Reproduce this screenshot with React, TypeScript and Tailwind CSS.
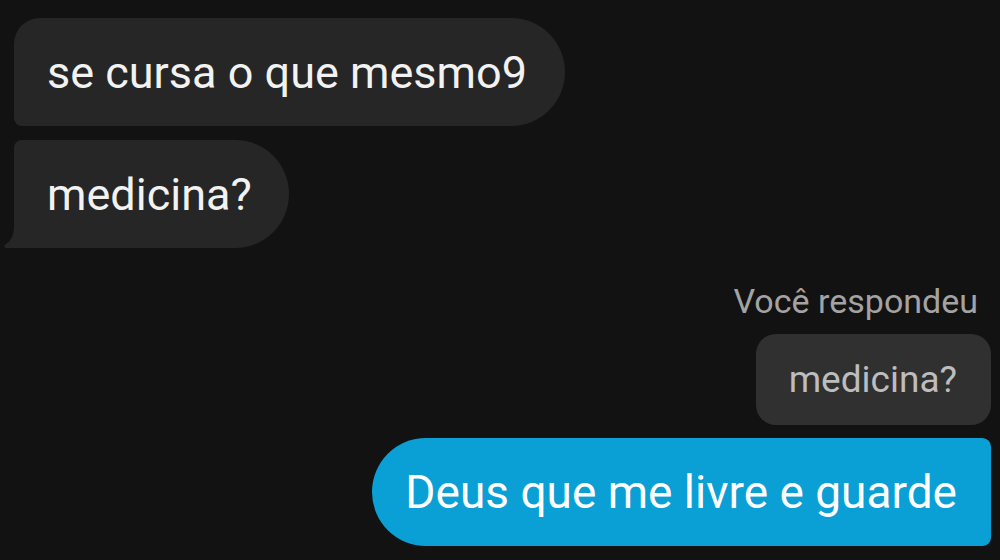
export default function App() {
  return (
    <div
      className="w-[1000px] h-[560px] overflow-hidden bg-[#121212] flex flex-col"
      style={{ fontFamily: 'Roboto, "Liberation Sans", sans-serif' }}
    >
      <div className="flex flex-col items-start pl-[14px] pt-[18px] gap-[14px]">
        <div className="h-[108px] flex items-center pl-[33px] pr-[38px] bg-[#262626] rounded-tl-[26px] rounded-bl-[8px] rounded-r-[54px] text-[#f2f2f2] text-[45px] leading-none">
          se cursa o que mesmo9
        </div>
        <div className="relative h-[108px] flex items-center pl-[33px] pr-[37px] bg-[#262626] rounded-tl-[8px] rounded-bl-none rounded-r-[54px] text-[#f2f2f2] text-[45px] leading-none">
          <svg
            className="absolute left-[-11px] bottom-0"
            width="14"
            height="22"
            viewBox="0 0 14 22"
          >
            <path d="M14 0 H11 Q11 13 3 18 Q0 20 2 21.5 Q3 22 5 22 H14 Z" fill="#262626" />
          </svg>
          medicina?
        </div>
      </div>

      <div className="flex flex-col items-end pr-[9px] mt-[36px]">
        <div className="text-[#a3a3a3] text-[34px] leading-[34px] pr-[13px]">
          Você respondeu
        </div>
        <div className="mt-[16px] h-[91px] flex items-center pl-[33px] pr-[34px] bg-[#303030] rounded-[20px] text-[#bdbdbd] text-[37px] leading-none">
          medicina?
        </div>
        <div className="mt-[13px] h-[108px] flex items-center pl-[33px] pr-[34px] bg-[#0aa0d6] rounded-l-[56px] rounded-r-[9px] text-white text-[46px] leading-none">
          Deus que me livre e guarde
        </div>
      </div>
    </div>
  );
}
